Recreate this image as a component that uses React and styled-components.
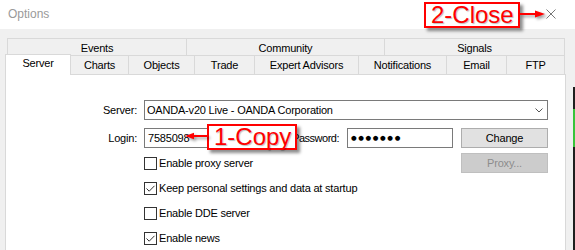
import React from "react";
import styled, { createGlobalStyle } from "styled-components";

const GlobalStyle = createGlobalStyle`
  html, body { margin: 0; padding: 0; }
  body {
    width: 575px;
    height: 250px;
    overflow: hidden;
    background: #f0f0f0;
    font-family: "Liberation Sans", Arial, sans-serif;
  }
`;

const Window = styled.div`
  position: relative;
  width: 575px;
  height: 250px;
  overflow: hidden;
  background: #f0f0f0;
  font-size: 11px;
  letter-spacing: -0.2px;
  color: #000;
`;

const TitleBar = styled.div`
  display: flex;
  align-items: center;
  justify-content: space-between;
  height: 29px;
  padding: 0 19px 0 8px;
  box-sizing: border-box;
  background: #fff;
`;

const Title = styled.span`
  font-size: 12px;
  line-height: 29px;
  letter-spacing: 0;
  color: #9a9a9a;
`;

const CloseIcon = styled.svg`
  display: block;
  margin-bottom: 2px;
`;

const Body = styled.div`
  padding: 9px 0 0 5px;
`;

const TabRow = styled.div`
  display: flex;
  align-items: flex-start;
  margin-left: ${(p) => p.$indent || 0}px;
`;

const Tab = styled.div`
  box-sizing: border-box;
  width: ${(p) => p.$w}px;
  height: ${(p) => (p.$back ? 17 : 19)}px;
  padding-top: ${(p) => (p.$back ? 2 : 1)}px;
  line-height: ${(p) => (p.$back ? 14 : 17)}px;
  border: 1px solid #d9d9d9;
  border-bottom: none;
  background: #f0f0f0;
  text-align: center;
  white-space: nowrap;

  & + & {
    margin-left: -1px;
  }
`;

const ActiveTab = styled(Tab)`
  position: relative;
  z-index: 1;
  height: 21px;
  margin-top: -1px;
  margin-bottom: -1px;
  padding-top: 0;
  line-height: 16px;
  background: #fff;
`;

const Panel = styled.div`
  box-sizing: border-box;
  width: 561px;
  height: 200px;
  padding: 25px 16px 0 0;
  border: 1px solid #d9d9d9;
  background: #fff;
`;

const Form = styled.div`
  display: grid;
  grid-template-columns: 131px 404px;
  column-gap: 7px;
  row-gap: 5px;
`;

const Label = styled.div`
  line-height: 20px;
  text-align: right;
  white-space: nowrap;
  margin-bottom: ${(p) => p.$after || 0}px;
`;

const Line = styled.div`
  grid-column: 2;
  display: flex;
  align-items: center;
  height: 20px;
  margin-bottom: ${(p) => p.$after || 0}px;
`;

const Select = styled.div`
  flex: 1;
  display: flex;
  align-items: center;
  justify-content: space-between;
  box-sizing: border-box;
  height: 20px;
  padding: 0 4px 0 2px;
  border: 1px solid #7a7a7a;
  background: #fff;
  line-height: 18px;
  white-space: nowrap;
`;

const Input = styled.div`
  box-sizing: border-box;
  width: ${(p) => p.$w}px;
  height: 20px;
  padding-left: 3px;
  border: 1px solid #7a7a7a;
  background: #fff;
  line-height: 18px;
`;

const Dots = styled.span`
  font-family: "DejaVu Sans", sans-serif;
  font-size: 6.5px;
  letter-spacing: 1.6px;
  line-height: 18px;
  vertical-align: top;
`;

const InlineLabel = styled.div`
  flex: 1;
  margin-right: 8px;
  text-align: right;
  letter-spacing: -0.5px;
  white-space: nowrap;
`;

const Button = styled.div`
  box-sizing: border-box;
  width: 87px;
  height: 20px;
  margin-left: ${(p) => p.$gap || 0}px;
  border: 1px solid ${(p) => (p.$disabled ? "#bfbfbf" : "#adadad")};
  background: ${(p) => (p.$disabled ? "#cccccc" : "#e1e1e1")};
  color: ${(p) => (p.$disabled ? "#8c8c8c" : "#000")};
  line-height: 18px;
  text-align: center;
`;

const CheckRow = styled.label`
  display: flex;
  align-items: center;
  gap: 2px;
  flex: 1;
  white-space: nowrap;
`;

const Box = styled.span`
  box-sizing: border-box;
  display: block;
  width: 13px;
  height: 13px;
  border: 1px solid #333;
  background: #fff;
`;

const Callout = styled.div`
  position: absolute;
  left: ${(p) => p.$x}px;
  top: ${(p) => p.$y}px;
  width: ${(p) => p.$w}px;
  height: 26px;
  box-sizing: border-box;
  padding-left: 5px;
  border: 2px solid #f00;
  background: #fff;
  box-shadow: 3px 3px 3px rgba(0, 0, 0, 0.45);
  color: #f00;
  font-size: 24px;
  line-height: 22px;
  letter-spacing: 0;
  white-space: nowrap;
  text-shadow: 1px 1px 1px rgba(0, 0, 0, 0.25);
`;

const Arrow = styled.svg`
  position: absolute;
  left: ${(p) => p.$x}px;
  top: ${(p) => p.$y}px;
  filter: drop-shadow(2px 2px 1.5px rgba(0, 0, 0, 0.4));
`;

const EdgeStrip = styled.div`
  position: absolute;
  right: 0;
  top: 87px;
  bottom: 0;
  width: 2px;
  background: #1f1f1f;

  &::before {
    content: "";
    display: block;
    margin-top: 22px;
    height: 38px;
    background: #39c43a;
  }
`;

function Check({ checked, children }) {
  return (
    <CheckRow>
      <Box>
        {checked && (
          <svg width="11" height="11" viewBox="0 0 11 11">
            <path d="M1.5 5.5 L4.2 8.2 L9.5 2.8" fill="none" stroke="#333" strokeWidth="1" />
          </svg>
        )}
      </Box>
      {children}
    </CheckRow>
  );
}

const backTabs = [
  ["Events", 180],
  ["Community", 199],
  ["Signals", 181],
];

const frontTabs = [
  ["Charts", 59],
  ["Objects", 67],
  ["Trade", 61],
  ["Expert Advisors", 105],
  ["Notifications", 89],
  ["Email", 61],
  ["FTP", 59],
];

export default function App() {
  return (
    <>
      <GlobalStyle />
      <Window>
        <TitleBar>
          <Title>Options</Title>
          <CloseIcon width="10" height="10" viewBox="0 0 10 10">
            <path d="M0.5 0.5 L9.5 9.5 M9.5 0.5 L0.5 9.5" stroke="#777" strokeWidth="1" />
          </CloseIcon>
        </TitleBar>

        <Body>
          <TabRow $indent={2}>
            {backTabs.map(([name, w]) => (
              <Tab key={name} $w={w} $back>
                {name}
              </Tab>
            ))}
          </TabRow>
          <TabRow>
            <ActiveTab $w={66}>Server</ActiveTab>
            {frontTabs.map(([name, w]) => (
              <Tab key={name} $w={w}>
                {name}
              </Tab>
            ))}
          </TabRow>

          <Panel>
            <Form>
              <Label $after={3}>Server:</Label>
              <Line $after={3}>
                <Select>
                  <span>OANDA-v20 Live - OANDA Corporation</span>
                  <svg width="8" height="5" viewBox="0 0 8 5">
                    <path d="M0.5 0.5 L4 4 L7.5 0.5" fill="none" stroke="#555" strokeWidth="1" />
                  </svg>
                </Select>
              </Line>

              <Label>Login:</Label>
              <Line>
                <Input $w={105}>7585098</Input>
                <InlineLabel>Password:</InlineLabel>
                <Input $w={106}>
                  <Dots>●●●●●●●</Dots>
                </Input>
                <Button $gap={8}>Change</Button>
              </Line>

              <Line>
                <Check>Enable proxy server</Check>
                <Button $disabled>Proxy...</Button>
              </Line>
              <Line>
                <Check checked>Keep personal settings and data at startup</Check>
              </Line>
              <Line>
                <Check>Enable DDE server</Check>
              </Line>
              <Line>
                <Check checked>Enable news</Check>
              </Line>
            </Form>
          </Panel>
        </Body>

        <Callout $x={424} $y={2} $w={96}>2-Close</Callout>
        <Arrow $x={519} $y={9} width="28" height="10" viewBox="0 0 28 10">
          <path d="M1 5 L17 5" stroke="#f00" strokeWidth="2" />
          <polygon points="16,1.5 26,5 16,8.5" fill="#f00" />
        </Arrow>

        <Callout $x={207} $y={124} $w={90}>1-Copy</Callout>
        <Arrow $x={183} $y={131} width="26" height="10" viewBox="0 0 26 10">
          <path d="M25 5 L10 5" stroke="#f00" strokeWidth="2" />
          <polygon points="11,1.8 2,5 11,8.2" fill="#f00" />
        </Arrow>

        <EdgeStrip />
      </Window>
    </>
  );
}
